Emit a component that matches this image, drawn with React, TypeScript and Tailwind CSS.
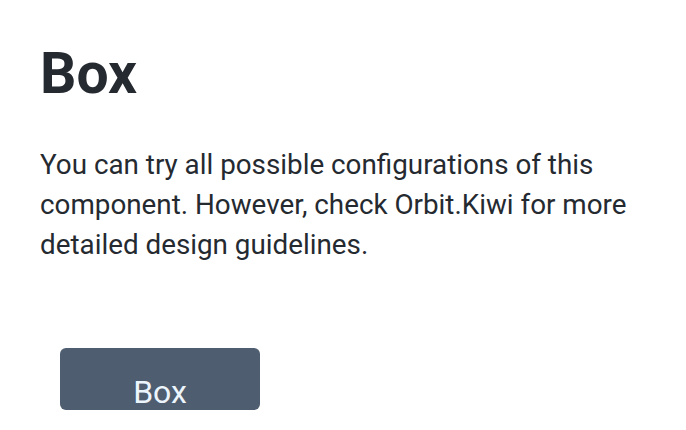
export default function App() {
  return (
    <div className="w-[686px] h-[430px] bg-white font-['Roboto',sans-serif] text-[#252a31] px-[40px] pt-[40px] overflow-hidden">
      <h1 className="text-[57px] font-bold leading-[68px]">Box</h1>
      <p className="mt-[37px] text-[27.8px] leading-[40px] w-[620px]">
        You can try all possible configurations of this component. However, check Orbit.Kiwi for more detailed design guidelines.
      </p>
      <div className="mt-[83px] ml-[20px] w-[200px] h-[62px] rounded-[6px] bg-[#4f5d70] flex items-end justify-center">
        <span className="text-[32px] leading-[40px] text-[#ecf5fc] translate-y-[2px]">Box</span>
      </div>
    </div>
  );
}
